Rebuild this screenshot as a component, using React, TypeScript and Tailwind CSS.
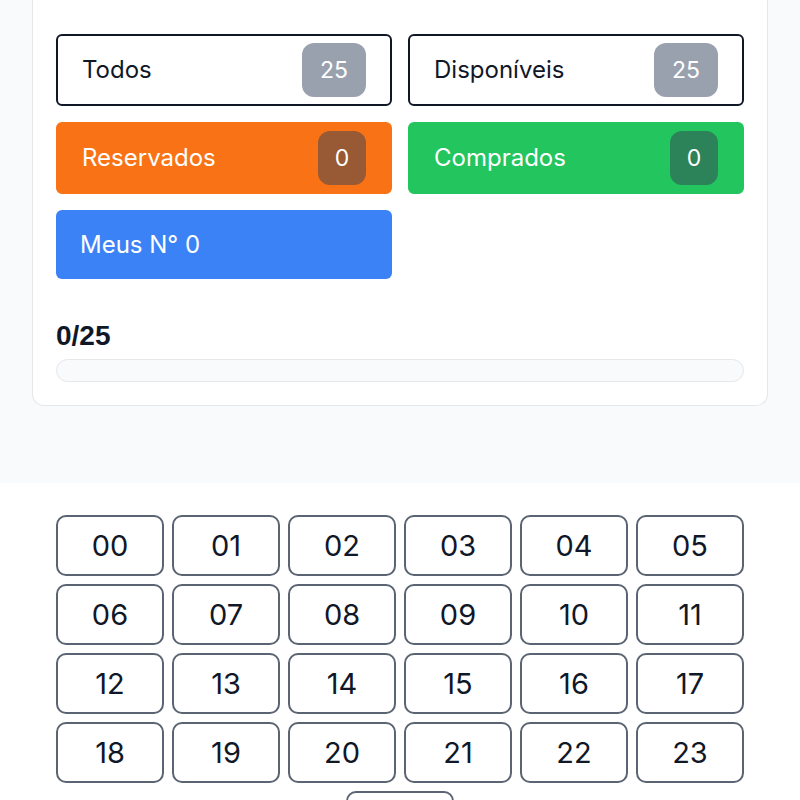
const filters = [
  { label: "Todos", count: 25, tone: "outline" },
  { label: "Disponíveis", count: 25, tone: "outline" },
  { label: "Reservados", count: 0, tone: "orange" },
  { label: "Comprados", count: 0, tone: "green" },
];

const numbers = Array.from({ length: 25 }, (_, i) => String(i).padStart(2, "0"));

function FilterButton({ label, count, tone }: { label: string; count: number; tone: string }) {
  const box =
    tone === "outline"
      ? "bg-white border-2 border-gray-900 text-gray-900"
      : tone === "orange"
        ? "bg-[#f97316] border-2 border-[#f97316] text-white"
        : "bg-[#22c55e] border-2 border-[#22c55e] text-white";
  const badge = tone === "outline" ? "bg-gray-400 text-white" : "bg-gray-700/50 text-white";
  return (
    <button className={`flex items-center justify-between h-[72px] rounded-md pl-6 pr-6 ${box}`}>
      <span className="text-[24px]">{label}</span>
      <span
        className={`flex items-center justify-center h-[54px] rounded-[12px] text-[23px] ${badge} ${
          count > 9 ? "w-[64px]" : "w-[48px]"
        }`}
      >
        {count}
      </span>
    </button>
  );
}

export default function App() {
  return (
    <div className="min-h-[800px] bg-white" style={{ fontFamily: "Inter, 'Noto Sans', sans-serif" }}>
      <div className="bg-[#f9fafb] px-8 pb-[77px]">
        <div className="bg-white border-x border-b border-gray-200 rounded-b-xl px-[23px] pt-[34px] pb-[23px]">
          <div className="grid grid-cols-2 gap-4">
            {filters.map((f) => (
              <FilterButton key={f.label} {...f} />
            ))}
            <button className="flex items-center h-[69px] rounded-md bg-[#3b82f6] px-6 text-white text-[24px]">
              Meus N° 0
            </button>
          </div>

          <div className="mt-[43px] text-[28px] font-bold text-gray-900 leading-none" style={{ fontFamily: "'Liberation Sans', Arial, sans-serif" }}>
            0/25
          </div>
          <div className="mt-[9px] h-[23px] rounded-full bg-[#f8fafc] border border-gray-200" />
        </div>
      </div>

      <div className="bg-white px-14 pt-8">
        <div className="flex flex-wrap justify-center gap-2">
          {numbers.map((n) => (
            <button
              key={n}
              className="w-[108px] h-[61px] rounded-[10px] border-2 border-[#5b6472] bg-white text-[29px] text-gray-900 flex items-center justify-center"
            >
              {n}
            </button>
          ))}
        </div>
      </div>
    </div>
  );
}
